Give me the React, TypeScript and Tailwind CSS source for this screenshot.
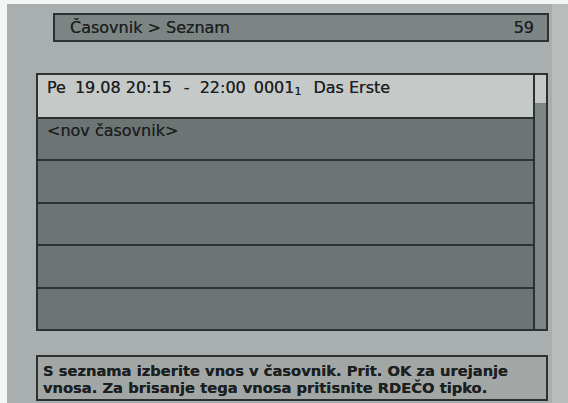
const rows = ["", "<nov časovnik>", "", "", "", ""];

export default function App() {
  return (
    <div
      className="flex h-[403px] w-[568px] bg-[#f4f5f5] pl-[7px] pt-[4px] text-[#1c2020] [text-shadow:0_0_0.6px_rgba(20,24,24,0.8)]"
      style={{ fontFamily: '"DejaVu Sans", Verdana, sans-serif' }}
    >
      <div className="flex flex-1 bg-[#a9aeae]">
        <div className="flex w-[545px] flex-col">
          {/* title bar */}
          <div className="ml-[46px] mt-[9px] flex h-[29px] w-[496px] items-center justify-between border-2 border-[#2c3232] bg-[#7c8584] pl-[15px] pr-[13px] pt-[1px] text-[16px] leading-[20px]">
            <span>Časovnik &gt; Seznam</span>
            <span>59</span>
          </div>

          {/* timer list */}
          <div className="ml-[29px] mt-[31px] flex h-[258px] w-[512px] border-2 border-[#2c3232]">
            <div className="flex flex-1 flex-col divide-y-2 divide-[#2c3232] border-r-2 border-[#2c3232] text-[16px] leading-[20px]">
              {rows.map((label, i) => (
                <div
                  key={i}
                  className={
                    i === 0
                      ? "flex flex-1 items-start bg-[#c5c9c8] pl-[9px] pt-[3px]"
                      : "flex flex-1 items-start bg-[#6d7574] pl-[9px] pt-[2px]"
                  }
                >
                  {i === 0 ? (
                    <div className="flex whitespace-pre">
                      <span>Pe</span>
                      <span className="ml-[9px]">19.08</span>
                      <span className="ml-[5px]">20:15</span>
                      <span className="ml-[12px]">-</span>
                      <span className="ml-[10px]">22:00</span>
                      <span className="ml-[8px]">0001</span>
                      <span className="relative top-[4px] text-[11px]">1</span>
                      <span className="ml-[12px]">Das Erste</span>
                    </div>
                  ) : (
                    <span>{label}</span>
                  )}
                </div>
              ))}
            </div>
            {/* scrollbar */}
            <div className="flex w-[11px] flex-col bg-[#7e8685]">
              <div className="h-[28px] bg-[#c5c9c8]" />
            </div>
          </div>

          {/* help text */}
          <div className="ml-[29px] mt-[24px] h-[46px] w-[512px] border-2 border-[#2c3232] bg-[#a2a7a6] pl-[5px] pt-[5px] text-[14.7px] font-bold leading-[17px]">
            S seznama izberite vnos v časovnik. Prit. OK za urejanje
            <br />
            vnosa. Za brisanje tega vnosa pritisnite RDEČO tipko.
          </div>
        </div>
        <div className="flex-1 bg-[#b8bcbb]" />
      </div>
    </div>
  );
}
